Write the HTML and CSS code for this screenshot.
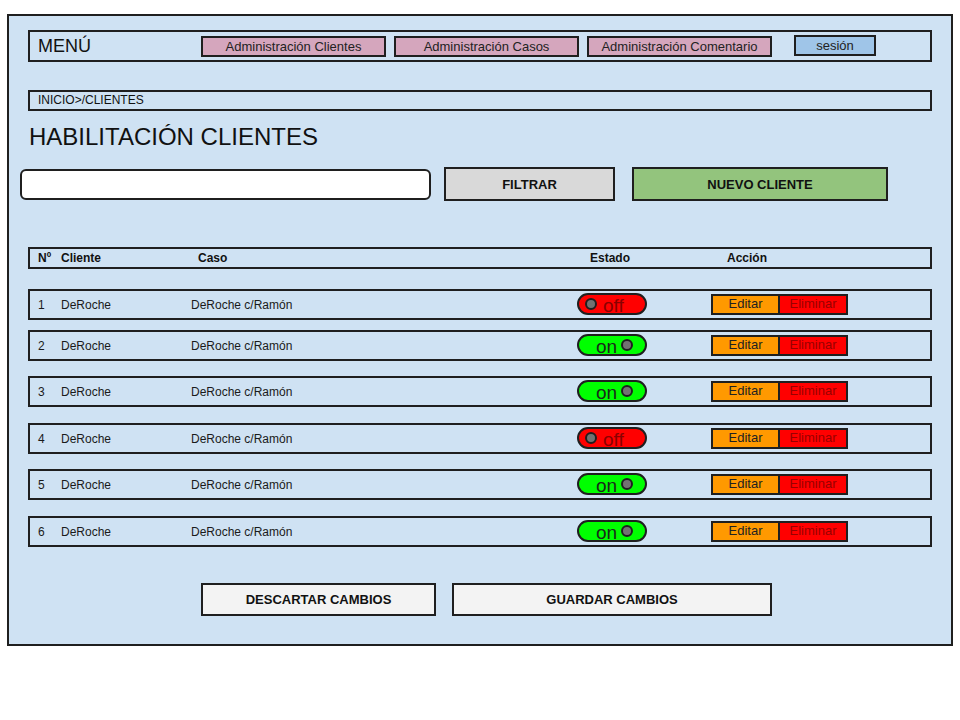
FILE: index.html
```html
<!DOCTYPE html>
<html lang="es">
<head>
<meta charset="utf-8">
<title>Habilitación Clientes</title>
<link rel="stylesheet" href="styles.css">
</head>
<body>
<div class="frame">
  <nav class="menu">
    <div class="menu-label">MENÚ</div>
    <a class="menu-btn pink">Administración Clientes</a>
    <a class="menu-btn pink">Administración Casos</a>
    <a class="menu-btn pink">Administración Comentario</a>
    <a class="menu-btn session">sesión</a>
  </nav>
  <div class="crumb">INICIO&gt;/CLIENTES</div>
  <h1 class="title">HABILITACIÓN CLIENTES</h1>
  <div class="filter-row">
    <input class="search" type="text">
    <button class="btn btn-filter">FILTRAR</button>
    <button class="btn btn-new">NUEVO CLIENTE</button>
  </div>
  <div class="thead">
    <span>Nº</span><span>Cliente</span><span>Caso</span><span>Estado</span><span>Acción</span>
  </div>
  <div class="rows">
    <div class="row"><span>1</span><span>DeRoche</span><span>DeRoche c/Ramón</span><span class="toggle off"><i class="knob"></i><b>off</b></span><span class="actions"><a class="edit">Editar</a><a class="del">Eliminar</a></span></div>
    <div class="row"><span>2</span><span>DeRoche</span><span>DeRoche c/Ramón</span><span class="toggle on"><b>on</b><i class="knob"></i></span><span class="actions"><a class="edit">Editar</a><a class="del">Eliminar</a></span></div>
    <div class="row"><span>3</span><span>DeRoche</span><span>DeRoche c/Ramón</span><span class="toggle on"><b>on</b><i class="knob"></i></span><span class="actions"><a class="edit">Editar</a><a class="del">Eliminar</a></span></div>
    <div class="row"><span>4</span><span>DeRoche</span><span>DeRoche c/Ramón</span><span class="toggle off"><i class="knob"></i><b>off</b></span><span class="actions"><a class="edit">Editar</a><a class="del">Eliminar</a></span></div>
    <div class="row"><span>5</span><span>DeRoche</span><span>DeRoche c/Ramón</span><span class="toggle on"><b>on</b><i class="knob"></i></span><span class="actions"><a class="edit">Editar</a><a class="del">Eliminar</a></span></div>
    <div class="row"><span>6</span><span>DeRoche</span><span>DeRoche c/Ramón</span><span class="toggle on"><b>on</b><i class="knob"></i></span><span class="actions"><a class="edit">Editar</a><a class="del">Eliminar</a></span></div>
  </div>
  <div class="footer">
    <button class="btn btn-light btn-discard">DESCARTAR CAMBIOS</button>
    <button class="btn btn-light btn-save">GUARDAR CAMBIOS</button>
  </div>
</div>
</body>
</html>
```

FILE: styles.css
```css
* { box-sizing: border-box; }
html, body { margin: 0; padding: 0; background: #ffffff; }
body {
  font-family: "Liberation Sans", Arial, sans-serif;
  color: #1a1a1a;
  width: 960px;
  height: 720px;
}
.frame {
  margin: 14px 0 0 7px;
  width: 946px;
  height: 632px;
  border: 2px solid #1f1f1f;
  background: #cfe2f3;
  padding-top: 14px;
}
.menu {
  margin: 0 19px;
  height: 32px;
  border: 2px solid #1f1f1f;
  display: flex;
  align-items: center;
}
.menu-label {
  width: 171px;
  padding-left: 8px;
  font-size: 18px;
  line-height: 20px;
  color: #111;
}
.menu-btn {
  height: 21px;
  border: 2px solid #1f1f1f;
  font-size: 13px;
  line-height: 17px;
  text-align: center;
  color: #222;
}
.pink { width: 185px; background: #d5a6bd; margin-right: 8px; }
.pink:nth-of-type(3) { margin-right: 22px; }
.session { width: 82px; background: #9fc5e8; height: 21px; margin-top: -2px; }
.crumb {
  margin: 28px 19px 0;
  height: 21px;
  border: 2px solid #1f1f1f;
  padding-left: 8px;
  font-size: 12px;
  line-height: 17px;
  color: #111;
}
.title {
  margin: 12px 0 0 20px;
  font-size: 24px;
  line-height: 28px;
  font-weight: normal;
  color: #111;
}
.filter-row {
  margin: 16px 0 0 11px;
  display: flex;
  align-items: center;
}
.search {
  width: 411px;
  height: 31px;
  border: 2px solid #1f1f1f;
  border-radius: 6px;
  background: #ffffff;
  margin: 0 13px 0 0;
  padding: 0;
}
.btn {
  border: 2px solid #1f1f1f;
  font-family: "Liberation Sans", Arial, sans-serif;
  font-weight: bold;
  font-size: 13px;
  color: #111;
  padding: 0;
  border-radius: 0;
}
.btn-filter { width: 171px; height: 34px; background: #d9d9d9; margin-right: 17px; }
.btn-new { width: 256px; height: 34px; background: #93c47d; }
.thead {
  margin: 46px 19px 0;
  height: 22px;
  border: 2px solid #1f1f1f;
  padding-left: 8px;
  display: grid;
  grid-template-columns: 23px 137px 392px 137px 1fr;
  align-items: center;
  font-size: 12px;
  font-weight: bold;
  color: #111;
}
.rows { margin: 20px 19px 0; }
.row {
  height: 31px;
  border: 2px solid #1f1f1f;
  padding-left: 8px;
  display: grid;
  grid-template-columns: 23px 130px 386px 134px 1fr;
  align-items: center;
  font-size: 12px;
  color: #1a1a1a;
  margin-top: 15px;
}
.row:nth-child(even) { margin-top: 16px; }
.row:nth-child(1) { margin-top: 0; }
.row:nth-child(2) { margin-top: 10px; }
.toggle {
  width: 70px;
  height: 22px;
  border: 2px solid #1f1f1f;
  border-radius: 11px;
  display: flex;
  align-items: center;
  margin-top: -1px;
}
.toggle b {
  font-weight: normal;
  font-size: 19px;
  line-height: 18px;
  padding-top: 3px;
}
.knob {
  width: 12px;
  height: 12px;
  border-radius: 50%;
  background: #727272;
  border: 2px solid #1f1f1f;
  display: block;
}
.toggle.off { background: #ff0000; padding-left: 6px; }
.toggle.off .knob { margin-right: 6px; }
.toggle.off b { color: #8a0000; }
.toggle.on { background: #00ff00; padding-left: 17px; }
.toggle.on b { color: #1a2a1a; margin-right: 4px; }
.actions { display: flex; }
.edit, .del {
  height: 21px;
  border: 2px solid #1f1f1f;
  font-size: 13px;
  line-height: 16px;
  text-align: center;
}
.edit { width: 68px; background: #ff9900; color: #222; border-right: 1px solid #1f1f1f; }
.del { width: 69px; background: #ff0000; color: #990000; border-left: 1px solid #1f1f1f; }
.footer {
  margin: 36px 0 0 192px;
  display: flex;
}
.btn-light { height: 33px; background: #f3f3f3; }
.btn-discard { width: 235px; margin-right: 16px; }
.btn-save { width: 320px; }
```
